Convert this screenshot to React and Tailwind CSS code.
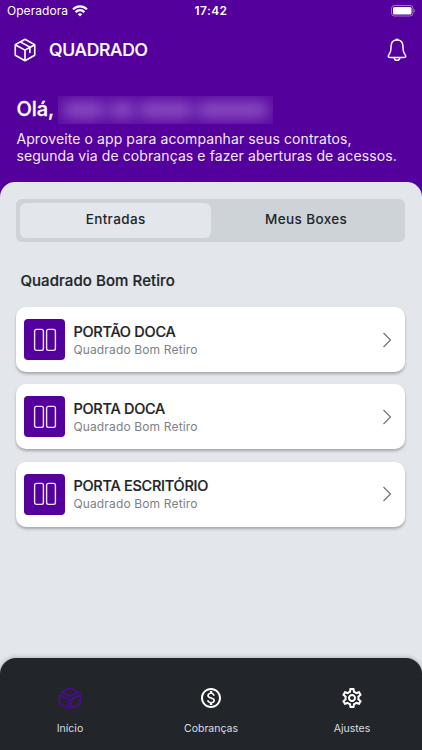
import { PiPackage } from "react-icons/pi";
import { MdOutlineMonetizationOn, MdOutlineSettings } from "react-icons/md";

const acessos = [
  { id: 1, nome: "PORTÃO DOCA", unidade: "Quadrado Bom Retiro" },
  { id: 2, nome: "PORTA DOCA", unidade: "Quadrado Bom Retiro" },
  { id: 3, nome: "PORTA ESCRITÓRIO", unidade: "Quadrado Bom Retiro" },
];

function IconeWifi() {
  return (
    <svg width="16" height="12" viewBox="0 0 16 12" fill="none" stroke="white" strokeWidth="2.3">
      <path d="M1 4.3C5 .3 11 .3 15 4.3" />
      <path d="M3.6 7.1C6.2 4.6 9.8 4.6 12.4 7.1" />
      <path d="M8 11.4L5.7 9.1C7 7.9 9 7.9 10.3 9.1Z" fill="white" stroke="none" />
    </svg>
  );
}

function IconeBateria() {
  return (
    <svg width="26" height="12" viewBox="0 0 26 12">
      <rect x="2.5" y="0.5" width="21.500" height="10.5" rx="3" fill="none" stroke="white" strokeOpacity="0.45" />
      <rect x="4" y="2" width="18.500" height="7.5" rx="1.6" fill="white" />
      <path d="M24.900 4v3.6c1.200-.5 1.200-3.1 0-3.6" fill="white" fillOpacity="0.5" />
    </svg>
  );
}

function IconeSino() {
  return (
    <svg width="26" height="26" viewBox="0 0 26 26" fill="none" stroke="white" strokeWidth="1.5" strokeLinecap="round" strokeLinejoin="round">
      <path d="M13 3C9.400 3 7.200 5.400 7.100 9C7 12.600 7.100 14.300 5.600 16.500C4.500 18.100 3.900 18.900 4.500 19.900C4.900 20.500 5.500 20.600 6.500 20.600H19.500C20.500 20.600 21.100 20.500 21.500 19.900C22.100 18.900 21.500 18.100 20.400 16.500C18.900 14.300 19 12.600 18.900 9C18.800 5.400 16.600 3 13 3Z" />
      <path d="M10.300 21.300C10.800 23.900 15.200 23.900 15.700 21.300" />
      <path d="M12 2.700C12.200 2 13.800 2 14 2.700" />
    </svg>
  );
}

function IconeCubo() {
  return (
    <svg width="24" height="24" viewBox="0 0 24 24" fill="none" stroke="#4b0a94" strokeWidth="1.7" strokeLinejoin="round">
      <path d="M12 1.900L20 6.200L12 10.300L4 6.200Z" />
      <path d="M1.600 8.800L10.700 13.300V22.200L3 18.600Q1.600 17.800 1.600 16.200Z" />
      <path d="M22.400 8.800L13.300 13.300V22.200L21 18.600Q22.400 17.800 22.400 16.200Z" />
    </svg>
  );
}

function IconePorta() {
  return (
    <svg width="24" height="24" viewBox="0 0 24 24" fill="none" stroke="#eee3fa" strokeWidth="1.4">
      <rect x="1.6" y="1.4" width="8.8" height="21" rx="1.8" />
      <rect x="13.6" y="1.4" width="8.8" height="21" rx="1.8" />
    </svg>
  );
}

function CardAcesso({ acesso }) {
  return (
    <button className="flex h-[65px] w-full items-center rounded-[10px] bg-white pl-2 pr-[13px] text-left shadow-[0_2px_3px_rgba(0,0,0,0.28)]">
      <span className="flex size-[41px] shrink-0 items-center justify-center rounded-[4px] bg-[#54009c]">
        <IconePorta />
      </span>
      <span className="ml-2 flex flex-1 flex-col pt-[2px]">
        <span className="text-[14.5px] font-medium leading-[18px] tracking-[-0.26px] text-[#212529] [-webkit-text-stroke:0.2px]">{acesso.nome}</span>
        <span className="text-[12px] leading-[18px] tracking-[0.15px] text-[#7d8186]">{acesso.unidade}</span>
      </span>
      <svg width="10" height="16" viewBox="0 0 10 16" fill="none" stroke="#6f7276" strokeWidth="1.2">
        <path d="M1.500 1L8.500 8L1.500 15" />
      </svg>
    </button>
  );
}

export default function App() {
  return (
    <div className="flex h-[750px] w-[422px] flex-col overflow-hidden bg-[#54009c] font-['Inter',sans-serif] text-white">
      <div className="grid h-[22px] shrink-0 grid-cols-3 items-center px-[7px]">
        <div className="flex items-center gap-[4px]">
          <span className="text-[12px] tracking-[0.05px]">Operadora</span>
          <IconeWifi />
        </div>
        <span className="text-center text-[12px] font-semibold tracking-[0.4px]">17:42</span>
        <div className="flex justify-end">
          <IconeBateria />
        </div>
      </div>

      <header className="flex h-14 shrink-0 items-center px-[12px]">
        <PiPackage className="size-[26px]" />
        <h1 className="ml-[11px] flex-1 text-[17.5px] font-medium tracking-[-0.28px] [-webkit-text-stroke:0.2px]">QUADRADO</h1>
        <IconeSino />
      </header>

      <section className="h-[104px] shrink-0 px-[16.4px] pt-[18px]">
        <div className="flex h-7 items-center gap-[3px]">
          <h2 className="w-[39px] pb-[2px] text-[20px] font-medium [-webkit-text-stroke:0.3px]">Olá,</h2>
          {/* nome do cliente oculto */}
          <div className="flex h-7 w-[215px] items-center gap-0.5 overflow-hidden bg-[#5a0ca1] px-1">
            <span className="h-4 w-11 rounded-full bg-[#8d4fc4] blur-[7px]"></span>
            <span className="h-4 w-7 rounded-full bg-[#8d4fc4] blur-[7px]"></span>
            <span className="h-4 w-14 rounded-full bg-[#8d4fc4] blur-[7px]"></span>
            <span className="h-4 flex-1 rounded-full bg-[#8d4fc4] blur-[7px]"></span>
          </div>
        </div>
        <p className="mt-[6px] whitespace-nowrap text-[14px] leading-[17.4px] tracking-[0.1px] text-[#f3e9fc]">
          Aproveite o app para acompanhar seus contratos,
          <br />
          segunda via de cobranças e fazer aberturas de acessos.
        </p>
      </section>

      <div className="flex flex-1 flex-col rounded-t-[15px] bg-[#e3e6eb] text-[#212529]">
        <main className="flex-1 px-[16.4px] pt-[17px]">
          <div className="grid h-[43px] w-[389px] grid-cols-2 rounded-[6px] bg-[#ced3d8] p-1 text-[13.5px] font-medium tracking-[0.38px]">
            <button className="rounded-[6px] bg-[#e3e6eb] pb-[3px]">Entradas</button>
            <button className="pb-[3px]">Meus Boxes</button>
          </div>

          <h3 className="ml-[4px] mt-[29px] text-[15px] font-medium leading-[20px] tracking-[0.08px] [-webkit-text-stroke:0.2px]">
            Quadrado Bom Retiro
          </h3>

          <div className="mt-[16px] flex w-[389px] flex-col gap-[12.3px]">
            {acessos.map((acesso) => (
              <CardAcesso key={acesso.id} acesso={acesso} />
            ))}
          </div>
        </main>

        <nav className="flex h-[92px] shrink-0 justify-between rounded-t-[16px] bg-[#22262b] px-[30px] pt-[28px] text-[10.5px] text-[#dcdee0] shadow-[0_0_5px_rgba(0,0,0,0.3)]">
          <button className="flex w-20 flex-col items-center">
            <IconeCubo />
            <span className="mt-[11px]">Início</span>
          </button>
          <button className="flex w-20 flex-col items-center">
            <MdOutlineMonetizationOn className="size-6 text-white" />
            <span className="mt-[11px]">Cobranças</span>
          </button>
          <button className="flex w-20 flex-col items-center">
            <MdOutlineSettings className="size-6 text-white" />
            <span className="mt-[11px]">Ajustes</span>
          </button>
        </nav>
      </div>
    </div>
  );
}
